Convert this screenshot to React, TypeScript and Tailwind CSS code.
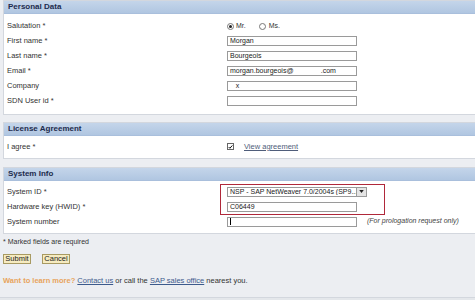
import React from "react";

function Header({ title }: { title: string }) {
  return (
    <div className="h-[13px] bg-gradient-to-b from-[#c4d5ea] to-[#b0c6e1] border-b border-[#a9bfdc] pl-[4px] flex items-center">
      <span className="font-bold text-[8px] text-[#1d2b4d] leading-none">{title}</span>
    </div>
  );
}

function Field({ value = "", cursor = false }: { value?: string; cursor?: boolean }) {
  return (
    <div className="w-[130px] h-[10px] bg-white border border-[#9a9a9a] flex items-center pl-[2px] text-[7px] text-[#222] leading-none overflow-hidden whitespace-pre">
      {cursor && <span className="w-px h-[7px] bg-black" />}
      {value}
    </div>
  );
}

function Row({ label, children, h = "h-[15px]" }: { label: string; children?: React.ReactNode; h?: string }) {
  return (
    <div className={`${h} flex items-center`}>
      <div className="w-[223px] pl-[3px] text-[7.5px] text-[#333] leading-none">{label}</div>
      <div className="flex items-center">{children}</div>
    </div>
  );
}

function Panel({ title, children }: { title: string; children: React.ReactNode }) {
  return (
    <div className="ml-[3px] border-l border-t border-b border-[#d3d7de]">
      <Header title={title} />
      <div className="bg-white relative">{children}</div>
    </div>
  );
}

export default function App() {
  return (
    <div
      className="w-[475px] h-[300px] overflow-hidden bg-[#eceef2] flex flex-col"
      style={{ fontFamily: '"Liberation Sans", Arial, sans-serif' }}
    >
      <Panel title="Personal Data">
        <div className="pt-[5px] pb-[6px]">
          <Row label="Salutation *" h="h-[14px]">
            <span className="w-[7px] h-[7px] rounded-full border border-[#777] bg-white flex items-center justify-center">
              <span className="w-[3px] h-[3px] rounded-full bg-[#222]" />
            </span>
            <span className="ml-[2px] text-[7px] text-[#333]">Mr.</span>
            <span className="ml-[13px] w-[7px] h-[7px] rounded-full border border-[#777] bg-white" />
            <span className="ml-[3px] text-[7px] text-[#333]">Ms.</span>
          </Row>
          <Row label="First name *">
            <Field value="Morgan" />
          </Row>
          <Row label="Last name *">
            <Field value="Bourgeois" />
          </Row>
          <Row label="Email *">
            <Field value="morgan.bourgeois@              .com" />
          </Row>
          <Row label="Company">
            <Field value="   x" />
          </Row>
          <Row label="SDN User id *">
            <Field />
          </Row>
        </div>
      </Panel>

      <div className="h-[7px]" />

      <Panel title="License Agreement">
        <div className="pt-[3px] pb-[4px]">
          <Row label="I agree *">
            <span className="w-[7px] h-[7px] border border-[#666] bg-white flex items-center justify-center">
              <svg viewBox="0 0 8 8" className="w-[6px] h-[6px]">
                <path d="M1 4 L3 6 L7 1.5" fill="none" stroke="#111" strokeWidth="1.6" />
              </svg>
            </span>
            <span className="ml-[10px] text-[7.5px] text-[#4f5d7a] underline">View agreement</span>
          </Row>
        </div>
      </Panel>

      <div className="h-[8px]" />

      <Panel title="System Info">
        <div className="pt-[3px] pb-[4px]">
          <Row label="System ID *">
            <div className="w-[140px] h-[10px] bg-white border border-[#9a9a9a] flex items-center text-[7px] text-[#222] leading-none">
              <span className="flex-1 pl-[2px] whitespace-nowrap overflow-hidden">NSP - SAP NetWeaver 7.0/2004s (SP9...</span>
              <span className="w-[10px] h-full border-l border-[#9a9a9a] bg-[#e4e4e4] flex items-center justify-center">
                <svg viewBox="0 0 6 4" className="w-[5px] h-[3px]">
                  <path d="M0 0 H6 L3 4 Z" fill="#222" />
                </svg>
              </span>
            </div>
          </Row>
          <Row label="Hardware key (HWID) *">
            <Field value="C06449" />
          </Row>
          <Row label="System number">
            <Field cursor />
            <span className="ml-[10px] text-[7px] italic text-[#444] whitespace-nowrap">(For prologation request only)</span>
          </Row>
          <div className="absolute left-[216px] top-[3px] w-[165px] h-[31px] border border-[#b0283a] pointer-events-none" />
        </div>
      </Panel>

      <div className="pl-[3px] pt-[4px] text-[7px] text-[#333] leading-none">* Marked fields are required</div>

      <div className="pl-[3px] pt-[9px] flex gap-[11px]">
        <button className="w-[28px] h-[10px] bg-[#f6ebc0] border border-[#a89a62] text-[7.5px] text-[#222] leading-none flex items-center justify-center">
          Submit
        </button>
        <button className="w-[28px] h-[10px] bg-[#f6ebc0] border border-[#a89a62] text-[7.5px] text-[#222] leading-none flex items-center justify-center">
          Cancel
        </button>
      </div>

      <div className="pl-[3px] pt-[13px] text-[7.5px] leading-none text-[#333] whitespace-nowrap">
        <span className="font-bold text-[#e8a45c]">Want to learn more?</span>{" "}
        <span className="text-[#3c5a8c] underline">Contact us</span> or call the{" "}
        <span className="text-[#3c5a8c] underline">SAP sales office</span> nearest you.
      </div>

      <div className="mt-auto h-[3px] border-t border-[#d3d7de] bg-[#e4e7eb]" />
    </div>
  );
}
